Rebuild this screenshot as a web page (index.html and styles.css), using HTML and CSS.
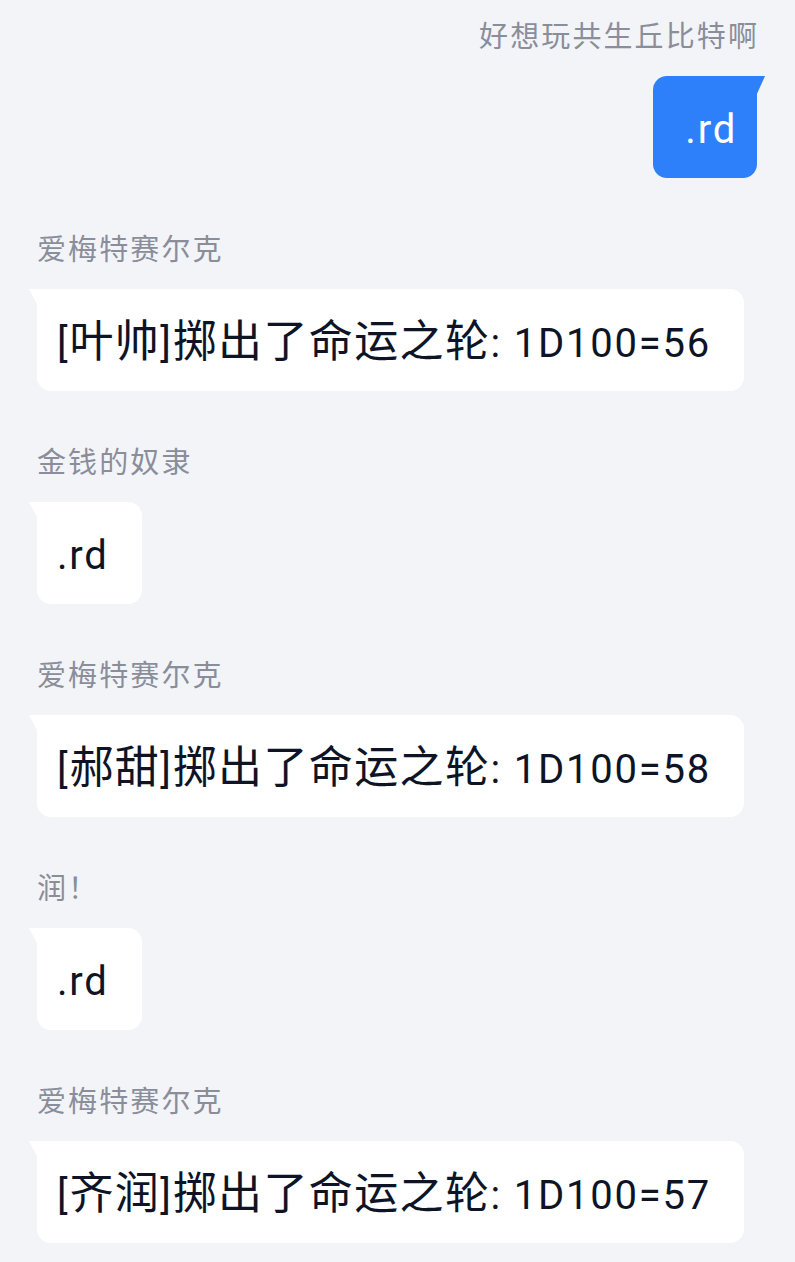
FILE: index.html
```html
<!DOCTYPE html>
<html lang="zh-CN">
<head>
<meta charset="utf-8">
<title>Chat</title>
<link rel="stylesheet" href="styles.css">
</head>
<body>
<div class="chat">
  <div class="msg self">
    <div class="name">好想玩共生丘比特啊</div>
    <div class="bubble">.rd</div>
  </div>
  <div class="msg">
    <div class="name">爱梅特赛尔克</div>
    <div class="bubble"><span>[<span class="cjk">叶帅</span>]<span class="cjk">掷出了命运之轮</span>: 1D100=56</span></div>
  </div>
  <div class="msg">
    <div class="name">金钱的奴隶</div>
    <div class="bubble">.rd</div>
  </div>
  <div class="msg">
    <div class="name">爱梅特赛尔克</div>
    <div class="bubble"><span>[<span class="cjk">郝甜</span>]<span class="cjk">掷出了命运之轮</span>: 1D100=58</span></div>
  </div>
  <div class="msg">
    <div class="name">润！</div>
    <div class="bubble">.rd</div>
  </div>
  <div class="msg">
    <div class="name">爱梅特赛尔克</div>
    <div class="bubble"><span>[<span class="cjk">齐润</span>]<span class="cjk">掷出了命运之轮</span>: 1D100=57</span></div>
  </div>
</div>
</body>
</html>
```
FILE: styles.css
```css
html, body {
  margin: 0;
  padding: 0;
  background: #f3f4f8;
}
body {
  font-family: Roboto, "Noto Sans CJK SC", sans-serif;
  overflow: hidden;
}
.chat {
  display: flex;
  flex-direction: column;
  gap: 52px;
  padding: 17px 38px 0 37px;
}
.msg {
  display: flex;
  flex-direction: column;
  align-items: flex-start;
  gap: 19px;
}
.msg.self {
  align-items: flex-end;
}
.name {
  height: 40px;
  line-height: 40px;
  font-size: 29px;
  letter-spacing: 2.1px;
  color: #8a8d9a;
  white-space: nowrap;
}
.msg.self .name {
  margin-right: -2px;
}
.bubble {
  position: relative;
  height: 102px;
  box-sizing: border-box;
  display: flex;
  align-items: center;
  padding: 6px 33px 0 20px;
  background: #ffffff;
  color: #0e1426;
  font-size: 40px;
  line-height: 48px;
  letter-spacing: 1.8px;
  border-radius: 0 14px 14px 14px;
  white-space: nowrap;
}
.cjk {
  font-size: 44px;
  letter-spacing: 1.4px;
}
.bubble::before {
  content: "";
  position: absolute;
  top: 0;
  left: -8px;
  width: 9px;
  height: 17px;
  background: inherit;
  clip-path: polygon(0 0, 100% 0, 100% 100%);
}
.msg.self .bubble {
  background: #2d7ffa;
  color: #ffffff;
  padding: 6px 20px 0 32px;
  border-radius: 14px 0 14px 14px;
}
.msg.self .bubble::before {
  left: auto;
  right: -8px;
  height: 20px;
  clip-path: polygon(0 0, 100% 0, 0 100%);
}
```
